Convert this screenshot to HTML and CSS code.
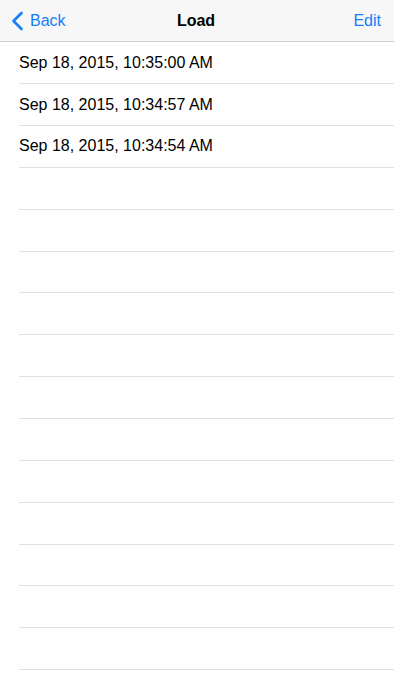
FILE: index.html
```html
<!DOCTYPE html>
<html>
<head>
<meta charset="utf-8">
<link rel="stylesheet" href="styles.css">
</head>
<body>
<header class="nav">
  <a class="back">
    <svg class="chev" width="13" height="20" viewBox="0 0 13 20"><path d="M10.5 2 L2.5 10 L10.5 18" fill="none" stroke="#157efb" stroke-width="2.6" stroke-linecap="round" stroke-linejoin="round"/></svg>
    <span>Back</span>
  </a>
  <div class="title">Load</div>
  <a class="edit">Edit</a>
</header>
<ul class="list">
  <li class="row">Sep 18, 2015, 10:35:00 AM</li>
  <li class="row">Sep 18, 2015, 10:34:57 AM</li>
  <li class="row">Sep 18, 2015, 10:34:54 AM</li>
  <li class="row"></li>
  <li class="row"></li>
  <li class="row"></li>
  <li class="row"></li>
  <li class="row"></li>
  <li class="row"></li>
  <li class="row"></li>
  <li class="row"></li>
  <li class="row"></li>
  <li class="row"></li>
  <li class="row"></li>
  <li class="row"></li>
  <li class="row"></li>
</ul>
</body>
</html>
```
FILE: styles.css
```css
html, body {
  margin: 0;
  padding: 0;
  background: #ffffff;
  font-family: "Liberation Sans", Arial, sans-serif;
  overflow: hidden;
  height: 700px;
}
.nav {
  height: 41.3px;
  background: #f7f7f7;
  border-bottom: 1px solid #cfcfcf;
  display: grid;
  grid-template-columns: 1fr auto 1fr;
  align-items: center;
  padding: 0 13px 0 11px;
}
.back {
  display: flex;
  align-items: center;
  gap: 6px;
  color: #157efb;
  font-size: 16px;
  justify-self: start;
}
.chev { display: block; }
.title {
  font-weight: bold;
  font-size: 16px;
  color: #000;
}
.edit {
  justify-self: end;
  color: #157efb;
  font-size: 16px;
}
.list {
  list-style: none;
  margin: 0;
  padding: 0 0 0 19px;
}
.row {
  height: 40.86px;
  border-bottom: 1px solid #e0e0e0;
  display: flex;
  align-items: center;
  font-size: 16px;
  color: #000;
}
```
